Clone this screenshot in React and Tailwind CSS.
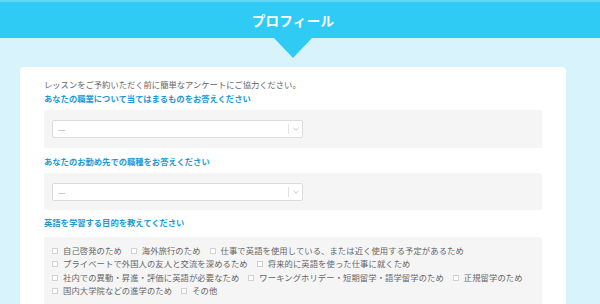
import React from "react";

const font = { fontFamily: '"Noto Sans CJK JP", "Noto Sans", sans-serif' };

function Select() {
  return (
    <div className="flex h-[18px] w-[251px] items-stretch rounded-[2px] border border-[#dcdcdc] bg-white">
      <div className="flex flex-1 items-center pl-[5px] text-[7px] leading-none text-[#888]">---</div>
      <div className="my-[3px] w-px bg-[#e2e2e2]" />
      <div className="flex w-[13px] items-center justify-center">
        <svg width="6" height="4" viewBox="0 0 6 4">
          <path d="M0.5 0.8 L3 3.2 L5.5 0.8" fill="none" stroke="#bbb" strokeWidth="0.8" />
        </svg>
      </div>
    </div>
  );
}

function Check({ label, last }) {
  return (
    <span className={`flex items-center ${last ? "" : "mr-[9px]"}`}>
      <span className="mr-[5px] inline-block h-[6px] w-[6px] border border-[#d2d2d2] bg-white" />
      <span className="tracking-[0.1px]">{label}</span>
    </span>
  );
}

export default function App() {
  const rows = [
    ["自己啓発のため", "海外旅行のため", "仕事で英語を使用している、または近く使用する予定があるため"],
    ["プライベートで外国人の友人と交流を深めるため", "将来的に英語を使った仕事に就くため"],
    ["社内での異動・昇進・評価に英語が必要なため", "ワーキングホリデー・短期留学・語学留学のため", "正規留学のため"],
    ["国内大学院などの進学のため", "その他"],
  ];
  return (
    <div className="h-[304px] w-[600px] overflow-hidden bg-[#d9f3fc]" style={font}>
      <div className="h-[2px] bg-[#62d6f6]" />
      <div className="flex h-[36px] w-full items-center justify-center bg-[#2fcbf4] pr-[14px]">
        <span className="text-[13.5px] font-bold tracking-[0.3px] text-white">プロフィール</span>
      </div>
      <div className="flex h-[29px] w-[586px] justify-center">
        <div className="h-0 w-0 border-x-[19px] border-t-[20px] border-x-transparent border-t-[#2fcbf4]" />
      </div>
      <div className="ml-[20px] w-[546px] rounded-[4px] bg-white px-[24px] pt-[10px] pb-[20px]">
        <div className="text-[8.3px] leading-[14px] text-[#666]">
          レッスンをご予約いただく前に簡単なアンケートにご協力ください。
        </div>
        <div className="text-[8.3px] font-bold leading-[14px] text-[#1b9ad6]">
          あなたの職業について当てはまるものをお答えください
        </div>
        <div className="mt-[5px] rounded-[2px] bg-[#f5f5f5] px-[8px] py-[10px]">
          <Select />
        </div>
        <div className="mt-[6px] text-[8.3px] font-bold leading-[14px] text-[#1b9ad6]">
          あなたのお勤め先での職種をお答えください
        </div>
        <div className="mt-[5px] rounded-[2px] bg-[#f5f5f5] px-[8px] pt-[10px] pb-[9px]">
          <Select />
        </div>
        <div className="mt-[5px] text-[8.3px] font-bold leading-[14px] text-[#1b9ad6]">
          英語を学習する目的を教えてください
        </div>
        <div className="mt-[8px] rounded-[2px] bg-[#f5f5f5] px-[8px] pt-[7px] pb-[12px] text-[8.3px] leading-[13.4px] text-[#666]">
          {rows.map((r, i) => (
            <div key={i} className="flex">
              {r.map((l, j) => (
                <Check key={j} label={l} last={j === r.length - 1} />
              ))}
            </div>
          ))}
        </div>
      </div>
    </div>
  );
}
